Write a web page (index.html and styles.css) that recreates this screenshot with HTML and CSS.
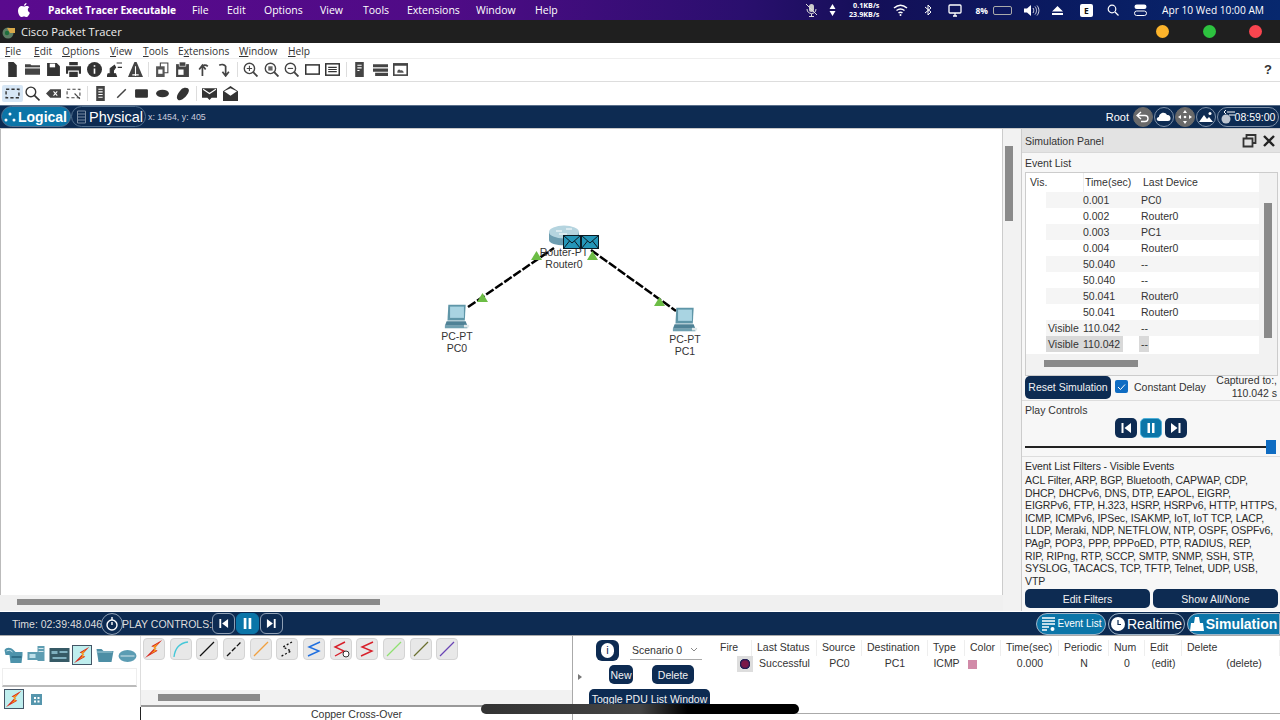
FILE: index.html
```html
<!DOCTYPE html>
<html lang="en">
<head>
<meta charset="utf-8">
<title>Cisco Packet Tracer</title>
<link rel="stylesheet" href="styles.css">
</head>
<body>
<svg class="defs" width="0" height="0" aria-hidden="true">
  <defs>
    <symbol id="bolt" viewBox="0 0 22 22"><path d="M20 1 8 8l4 1.500L1 21l14-8-4-2 9-10z" fill="#d8281e"/><path d="M16.500 4 9.500 8.500l4.500 1.500-7 6.500 6.500-3.500-3-2z" fill="#f9a81b"/></symbol>
    <symbol id="envelope" viewBox="0 0 18 14"><rect x=".5" y=".5" width="17" height="13" fill="#2596b8" stroke="#0a1a24"/><path d="M.5.5 9 8l8.500-7.500M.5 13.500 6.500 6M17.500 13.500 11.500 6" fill="none" stroke="#0a1a24"/></symbol>
    <symbol id="pc" viewBox="0 0 30 30"><path d="M5 1h20l-1 18H4z" fill="#5f96a8"/><rect x="7" y="3" width="16" height="13" fill="#a9d4e2"/><path d="M3 20h22l2 5H1z" fill="#4f8296"/><rect x="1" y="25" width="26" height="3" fill="#6fa0b0"/><path d="M23 24h6v3h-6z" fill="#dfe8ea"/></symbol>
    <symbol id="triangle" viewBox="0 0 10 8"><path d="M5 0 10 8H0z" fill="#6cbd45"/></symbol>
    <symbol id="prev" viewBox="0 0 12 12"><path d="M1.500 1h2v10h-2zM11 1v10L4.500 6z" fill="#fff"/></symbol>
    <symbol id="next" viewBox="0 0 12 12"><path d="M10.500 1h-2v10h2zM1 1v10l6.500-5z" fill="#fff"/></symbol>
    <symbol id="pause" viewBox="0 0 12 12"><path d="M2.500 1h2.500v10H2.500zM7 1h2.500v10H7z" fill="#fff"/></symbol>
  </defs>
</svg>

<header class="macbar">
  <svg class="apple" width="12" height="14" viewBox="0 0 12 14"><path d="M8.500 0c.1 1.300-1 2.800-2.500 2.800C5.900 1.500 7.100.2 8.500 0zM6 3.500c.8 0 1.500-.6 2.700-.6 1 0 2 .5 2.600 1.400-2.200 1.400-1.800 4.400.6 5.400-.7 1.800-2 4.300-3.400 4.300-1 0-1.300-.6-2.500-.6s-1.600.6-2.500.6C1.800 14 0 10.600 0 7.800 0 4.900 1.900 3 3.700 3c1 0 1.700.5 2.300.5z" fill="#fff"/></svg>
  <strong class="mac-app">Packet Tracer Executable</strong>
  <nav class="mac-menu"><span>File</span><span>Edit</span><span>Options</span><span>View</span><span>Tools</span><span>Extensions</span><span>Window</span><span>Help</span></nav>
  <div class="mac-status">
    <svg width="13" height="14" viewBox="0 0 13 14"><rect x="4" y="1" width="5" height="8" rx="2.500" fill="#ccc"/><path d="M2 6c0 6 9 6 9 0M6.500 11v2M4 13.500h5M1 1l11 11" fill="none" stroke="#ddd"/></svg>
    <svg class="st-arrows" width="7" height="12" viewBox="0 0 7 12"><path d="M3.500 0 6.500 5H.5zM3.500 12 .5 7h6z" fill="#fff"/></svg>
    <span class="st-speed">0.1KB/s<br>23.9KB/s</span>
    <svg class="st-wifi" width="15" height="12" viewBox="0 0 15 12"><path d="M1 4c4-3.500 9-3.500 13 0M3.500 6.500c2.500-2 5.500-2 8 0M5.500 9c1.200-1 2.800-1 4 0" fill="none" stroke="#fff" stroke-width="1.500"/><circle cx="7.500" cy="11" r="1" fill="#fff"/></svg>
    <svg class="st-bt" width="8" height="12" viewBox="0 0 8 12"><path d="M1 3l6 5-3 3V1l3 3-6 5" fill="none" stroke="#fff"/></svg>
    <svg class="st-display" width="14" height="13" viewBox="0 0 14 13"><rect x="1" y="1" width="12" height="8" rx="1" fill="none" stroke="#fff" stroke-width="1.300"/><path d="M5 12h4M7 9v3" stroke="#fff" stroke-width="1.300"/></svg>
    <span class="st-battery">8%</span>
    <span class="batt"></span>
    <svg class="st-vol" width="16" height="11" viewBox="0 0 16 11"><path d="M0 3.500h3L7 0v11L3 7.500H0z" fill="#fff"/><path d="M9 3c1 1.500 1 3.500 0 5M11 1.500c2 2.500 2 5.500 0 8M13 .5c2.500 3 2.500 7 0 10" fill="none" stroke="#fff" stroke-width=".8"/></svg>
    <svg class="st-eject" width="11" height="9" viewBox="0 0 11 9"><path d="M5.500 0 11 5.500H0zM0 7h11v2H0z" fill="#fff"/></svg>
    <span class="st-e">E</span>
    <svg class="st-search" width="12" height="12" viewBox="0 0 12 12"><circle cx="5" cy="5" r="3.800" fill="none" stroke="#fff" stroke-width="1.200"/><path d="m8 8 3.500 3.500" stroke="#fff" stroke-width="1.200"/></svg>
    <svg class="st-toggle" width="13" height="12" viewBox="0 0 13 12"><rect x=".5" y=".5" width="12" height="4.500" rx="2.200" fill="#fff"/><rect x=".5" y="7" width="12" height="4.500" rx="2.200" fill="none" stroke="#fff"/></svg>
    <span class="st-clock">Apr 10 Wed 10:00 AM</span>
  </div>
</header>

<div class="titlebar">
  <svg class="pt-logo" width="14" height="14" viewBox="0 0 14 14"><circle cx="6" cy="8" r="5.500" fill="#5e7d64"/><path d="M5 3h8v5H8z" fill="#d7a94a"/><circle cx="5" cy="8" r="2.200" fill="#1f6e3c"/></svg>
  <span class="title-text">Cisco Packet Tracer</span>
  <span class="dots"><i class="dot d-yellow"></i><i class="dot d-green"></i><i class="dot d-red"></i></span>
</div>

<nav class="menubar">
  <span><u>F</u>ile</span><span><u>E</u>dit</span><span><u>O</u>ptions</span><span><u>V</u>iew</span><span><u>T</u>ools</span><span>E<u>x</u>tensions</span><span><u>W</u>indow</span><span><u>H</u>elp</span>
</nav>

<div class="toolbar tb1">
  <svg class="ic" viewBox="0 0 14 14"><path d="M3 0h5l3 3v11H3z" fill="#333"/></svg>
  <svg class="ic" viewBox="0 0 14 14"><path d="M0 2h5l1 1h8v9H0z" fill="#444"/><path d="M0 5.500h14" stroke="#fff"/></svg>
  <svg class="ic" viewBox="0 0 14 14"><path d="M1 1h9l3 3v9H1z" fill="#333"/><rect x="3.500" y="1.500" width="5" height="3.500" fill="#fff"/></svg>
  <svg class="ic" viewBox="0 0 14 14"><path d="M3 0h8v3H3zM0 4h14v7h-2V8H2v3H0zM3 9h8v5H3z" fill="#333"/></svg>
  <svg class="ic" viewBox="0 0 14 14"><circle cx="7" cy="7" r="7" fill="#333"/><path d="M7 3v1.500M7 6v5" stroke="#fff" stroke-width="1.500"/></svg>
  <svg class="ic" viewBox="0 0 14 14"><path d="M0 14l1-3h2V6l4-3 1 2-2 3v3h2l1 3zM9 1h5M10 5h4" fill="#333" stroke="#333"/></svg>
  <svg class="ic" viewBox="0 0 14 14"><path d="M6 0 0 14h14L8 0z" fill="#444"/><path d="M7 4v9M4 12h6" stroke="#fff"/></svg>
  <i class="sep"></i>
  <svg class="ic" viewBox="0 0 14 14"><path d="M5 1h7v9H5z" fill="none" stroke="#444"/><path d="M1 4h8v10H1z" fill="#555"/><path d="M3 7h4v4H3z" fill="#fff"/></svg>
  <svg class="ic" viewBox="0 0 14 14"><path d="M1 2h12v12H1z" fill="#444"/><path d="M4 0h6v4H4z" fill="#444" stroke="#fff" stroke-width=".6"/><path d="M3 7h5v5H3z" fill="#fff"/></svg>
  <svg class="ic" viewBox="0 0 14 14"><path d="M6 13V4c0-1 3-2 5 0M3 7l3-4 3 4" fill="none" stroke="#444" stroke-width="1.600"/></svg>
  <svg class="ic" viewBox="0 0 14 14"><path d="M9 13V4C8 2 5 2 3 3M12 9l-3 4-3-4" fill="none" stroke="#444" stroke-width="1.600"/></svg>
  <i class="sep"></i>
  <svg class="ic" viewBox="0 0 14 14"><circle cx="6" cy="6" r="4.800" fill="none" stroke="#444" stroke-width="1.300"/><path d="m9.500 9.500 4 4" stroke="#444" stroke-width="1.800"/><path d="M3.500 6h5M6 3.500v5" stroke="#444"/></svg>
  <svg class="ic" viewBox="0 0 14 14"><circle cx="6" cy="6" r="4.800" fill="none" stroke="#444" stroke-width="1.300"/><path d="m9.500 9.500 4 4" stroke="#444" stroke-width="1.800"/><rect x="4" y="4" width="4" height="4" fill="#666"/></svg>
  <svg class="ic" viewBox="0 0 14 14"><circle cx="6" cy="6" r="4.800" fill="none" stroke="#444" stroke-width="1.300"/><path d="m9.500 9.500 4 4" stroke="#444" stroke-width="1.800"/><path d="M3.500 6h5" stroke="#444"/></svg>
  <svg class="ic" viewBox="0 0 14 14"><rect x=".7" y="2.700" width="12.600" height="8.600" fill="none" stroke="#333" stroke-width="1.400"/></svg>
  <svg class="ic" viewBox="0 0 14 14"><rect x=".7" y="1.700" width="12.600" height="10.600" fill="none" stroke="#333" stroke-width="1.400"/><path d="M3 5h8M3 7h8M3 9h8" stroke="#333"/></svg>
  <i class="sep"></i>
  <svg class="ic" viewBox="0 0 14 14"><rect x="3" y="0" width="8" height="14" fill="#444"/><path d="M5 3h4M5 5.500h4M5 8h2" stroke="#fff"/></svg>
  <svg class="ic" viewBox="0 0 14 14"><path d="M0 2h14v3H0zM0 6h14v3H0zM2 10h12v3H2z" fill="#444"/></svg>
  <svg class="ic" viewBox="0 0 14 14"><rect y="1" width="14" height="12" fill="#444"/><rect x="1.500" y="3.500" width="11" height="8" fill="#fff"/><path d="M4 10c0-3 2-4 3-2 1-1 3 0 3 2z" fill="#555"/></svg>
  <span class="help">?</span>
</div>

<div class="toolbar tb2">
  <span class="sel-wrap"><svg class="ic" viewBox="0 0 14 14"><rect x="1" y="3" width="12" height="8" fill="none" stroke="#333" stroke-width="1.300" stroke-dasharray="3 2"/></svg></span>
  <svg class="ic" viewBox="0 0 14 14"><circle cx="5.500" cy="5.500" r="4.500" fill="none" stroke="#333" stroke-width="1.300"/><path d="m8.500 8.500 5 5" stroke="#333" stroke-width="1.500"/></svg>
  <svg class="ic" viewBox="0 0 14 14"><path d="M0 7l4-4h10v8H4z" fill="#444"/><path d="m7 5 3.500 4M10.500 5 7 9" stroke="#fff"/></svg>
  <svg class="ic" viewBox="0 0 14 14"><path d="M1 3h12v8H1z" fill="none" stroke="#444" stroke-dasharray="3 2"/><path d="m8 7 5 5" stroke="#444"/></svg>
  <i class="sep"></i>
  <svg class="ic" viewBox="0 0 14 14"><rect x="3" y="0" width="8" height="14" fill="#444"/><path d="M5 3h4M5 5.500h4M5 8h4M5 10.500h4" stroke="#fff"/></svg>
  <svg class="ic" viewBox="0 0 14 14"><path d="m3 11 8-8" stroke="#444" stroke-width="1.400"/></svg>
  <svg class="ic" viewBox="0 0 14 14"><rect x="1" y="3" width="12" height="8" rx="1" fill="#333"/></svg>
  <svg class="ic" viewBox="0 0 14 14"><ellipse cx="7" cy="7" rx="6" ry="3.500" fill="#333"/></svg>
  <svg class="ic" viewBox="0 0 14 14"><path d="M3 13c-3-2 0-7 3-10 2-2 7-2 7 1 0 4-7 11-10 9z" fill="#333"/></svg>
  <i class="sep"></i>
  <svg class="ic" viewBox="0 0 14 14"><path d="M0 2h14v9H9l-2 2-2-2H0z" fill="#333"/><path d="m1 3 6 4 6-4" fill="none" stroke="#fff"/></svg>
  <svg class="ic" viewBox="0 0 14 14"><path d="M0 5l7-5 7 5v9H0z" fill="#333"/><path d="m1 5 6-3 6 3-6 4z" fill="#fff"/></svg>
</div>

<div class="navbar">
  <button class="pill pill-active"><svg width="12" height="12" viewBox="0 0 12 12"><circle cx="6" cy="3" r="1.500" fill="#fff"/><circle cx="2" cy="9" r="1.500" fill="#fff"/><circle cx="10" cy="9" r="1.500" fill="#fff"/></svg>Logical</button>
  <button class="pill pill-phys"><svg width="11" height="14" viewBox="0 0 11 14"><path d="M1.500 1h8v12h-8zM1.500 4h8M1.500 7h8M1.500 10h8" fill="none" stroke="#7b8ca3"/></svg>Physical</button>
  <span class="coords">x: 1454, y: 405</span>
  <div class="nav-right">
    <span class="root">Root</span>
    <span class="round grey"><svg width="14" height="12" viewBox="0 0 14 12"><path d="M5 1 1 4.500 5 8M1 4.500h8c4 0 4 6 0 6H5" fill="none" stroke="#fff" stroke-width="1.400"/></svg></span>
    <span class="round"><svg width="16" height="12" viewBox="0 0 16 12"><path d="M3 10C0 10 0 6 3 6c0-4 6-6 8-2 4-1 5 6 1 6z" fill="#fff"/></svg></span>
    <span class="round grey"><svg width="14" height="14" viewBox="0 0 14 14"><path d="M7 0 9 3H5zM7 14 5 11h4zM0 7l3-2v4zM14 7l-3 2V5z" fill="#fff"/><circle cx="7" cy="7" r="1.300" fill="#fff"/></svg></span>
    <span class="round"><svg width="14" height="12" viewBox="0 0 14 12"><path d="M0 11 5 4l3 4 2-2 4 5z" fill="#fff"/><circle cx="11" cy="2.500" r="1.500" fill="#fff"/></svg></span>
    <span class="round clockpill"><svg width="14" height="14" viewBox="0 0 14 14"><circle cx="5" cy="9" r="4.500" fill="#bcc4cf"/><path d="M6 2h8M8 5h6M5 0 3 2l2 2" stroke="#fff" fill="none"/></svg>08:59:00</span>
  </div>
</div>

<main class="workspace">
  <section class="canvas-area">
    <div class="canvas-row">
      <div class="canvas">
        <svg class="links" width="1002" height="466" viewBox="0 0 1002 466">
          <path d="M467 178 553 119M590 121 675 182" stroke="#000" stroke-width="2.500" stroke-dasharray="9 2" fill="none"/>
        </svg>
        <svg class="tri t1" width="11" height="9"><use href="#triangle"/></svg>
        <svg class="tri t2" width="11" height="9"><use href="#triangle"/></svg>
        <svg class="tri t3" width="11" height="9"><use href="#triangle"/></svg>
        <svg class="tri t4" width="11" height="9"><use href="#triangle"/></svg>
        <div class="node n-router">
          <svg width="32" height="22" viewBox="0 0 32 22"><path d="M1 7v8c0 7 30 7 30 0V7z" fill="#6d9db0"/><ellipse cx="16" cy="7" rx="15" ry="6.500" fill="#b5d4df"/><path d="M8 6h6M18 4h6M11 9h8" stroke="#fff"/></svg>
          <span>Router-PT<br>Router0</span>
        </div>
        <svg class="env e1" width="18" height="14"><use href="#envelope"/></svg>
        <svg class="env e2" width="18" height="14"><use href="#envelope"/></svg>
        <div class="node n-pc0"><svg width="30" height="26" viewBox="0 0 30 30"><use href="#pc"/></svg><span>PC-PT<br>PC0</span></div>
        <div class="node n-pc1"><svg width="30" height="26" viewBox="0 0 30 30"><use href="#pc"/></svg><span>PC-PT<br>PC1</span></div>
      </div>
      <div class="vscroll"><i></i></div>
    </div>
    <div class="hscroll"><i></i></div>
  </section>

  <aside class="panel">
    <div class="panel-head"><span>Simulation Panel</span>
      <svg width="15" height="14" viewBox="0 0 15 14"><path d="M4.500 4V1h9v8h-3M1.500 4.500h9v8h-9z" fill="none" stroke="#333" stroke-width="1.800"/></svg>
      <svg width="14" height="14" viewBox="0 0 14 14"><path d="m2 2 10 10M12 2 2 12" stroke="#222" stroke-width="2.400"/></svg>
    </div>
    <div class="ev-label">Event List</div>
    <div class="ev-box">
      <div class="ev-main">
        <div class="ev-table">
          <div class="ev-h"><span class="c-vis h-vis">Vis.</span><span class="c-time">Time(sec)</span><span class="c-dev h-dev">Last Device</span></div>
          <div class="ev-r alt"><span class="c-vis"></span><span class="c-time">0.001</span><span class="c-dev">PC0</span></div>
          <div class="ev-r"><span class="c-vis"></span><span class="c-time">0.002</span><span class="c-dev">Router0</span></div>
          <div class="ev-r alt"><span class="c-vis"></span><span class="c-time">0.003</span><span class="c-dev">PC1</span></div>
          <div class="ev-r"><span class="c-vis"></span><span class="c-time">0.004</span><span class="c-dev">Router0</span></div>
          <div class="ev-r alt"><span class="c-vis"></span><span class="c-time">50.040</span><span class="c-dev">--</span></div>
          <div class="ev-r"><span class="c-vis"></span><span class="c-time">50.040</span><span class="c-dev">--</span></div>
          <div class="ev-r alt"><span class="c-vis"></span><span class="c-time">50.041</span><span class="c-dev">Router0</span></div>
          <div class="ev-r"><span class="c-vis"></span><span class="c-time">50.041</span><span class="c-dev">Router0</span></div>
          <div class="ev-r alt"><span class="c-vis">Visible</span><span class="c-time">110.042</span><span class="c-dev">--</span></div>
          <div class="ev-r sel"><span class="c-vis">Visible</span><span class="c-time">110.042</span><span class="c-dev"><b>--</b></span></div>
        </div>
        <div class="ev-v"><i></i></div>
      </div>
      <div class="ev-hs"><i></i></div>
    </div>
    <div class="sim-row">
      <button class="btn reset">Reset Simulation</button>
      <span class="check"><svg width="9" height="8" viewBox="0 0 9 8"><path d="m1 4 2.500 2.500L8 1.500" fill="none" stroke="#fff"/></svg></span>
      <span class="cdelay">Constant Delay</span>
      <span class="captured">Captured to:,<br>110.042 s</span>
    </div>
    <div class="play">
      <div class="play-label">Play Controls</div>
      <div class="play-btns">
        <button class="pbtn"><svg width="12" height="12"><use href="#prev"/></svg></button>
        <button class="pbtn on"><svg width="12" height="12"><use href="#pause"/></svg></button>
        <button class="pbtn"><svg width="12" height="12"><use href="#next"/></svg></button>
      </div>
      <div class="slider"><i></i></div>
    </div>
    <div class="filters">
      <div class="f-title">Event List Filters - Visible Events</div>
      <p>ACL Filter, ARP, BGP, Bluetooth, CAPWAP, CDP,<br>DHCP, DHCPv6, DNS, DTP, EAPOL, EIGRP,<br>EIGRPv6, FTP, H.323, HSRP, HSRPv6, HTTP, HTTPS,<br>ICMP, ICMPv6, IPSec, ISAKMP, IoT, IoT TCP, LACP,<br>LLDP, Meraki, NDP, NETFLOW, NTP, OSPF, OSPFv6,<br>PAgP, POP3, PPP, PPPoED, PTP, RADIUS, REP,<br>RIP, RIPng, RTP, SCCP, SMTP, SNMP, SSH, STP,<br>SYSLOG, TACACS, TCP, TFTP, Telnet, UDP, USB,<br>VTP</p>
      <div class="f-btns"><button class="btn">Edit Filters</button><button class="btn">Show All/None</button></div>
    </div>
  </aside>
</main>

<div class="simbar">
  <span class="time">Time: 02:39:48.046</span>
  <span class="timer"><svg width="14" height="14" viewBox="0 0 14 14"><circle cx="7" cy="8" r="5" fill="none" stroke="#fff" stroke-width="1.400"/><path d="M7 0v3M7 5v3" stroke="#fff" stroke-width="1.400"/></svg></span>
  <span class="pc-label">PLAY CONTROLS:</span>
  <button class="sbtn"><svg width="11" height="11" viewBox="0 0 12 12"><use href="#prev"/></svg></button>
  <button class="sbtn on"><svg width="13" height="13" viewBox="0 0 12 12"><use href="#pause"/></svg></button>
  <button class="sbtn"><svg width="11" height="11" viewBox="0 0 12 12"><use href="#next"/></svg></button>
  <div class="modes">
    <button class="mode m-ev"><svg width="15" height="16" viewBox="0 0 15 16"><path d="M1 2h13M1 5h13M1 8h13M1 11h7M1 14h5" stroke="#fff" stroke-width="1.400"/><circle cx="11.500" cy="13" r="2" fill="#fff"/></svg>Event List</button>
    <button class="mode m-rt"><svg width="14" height="14" viewBox="0 0 14 14"><circle cx="7" cy="7" r="7" fill="#fff"/><path d="M7 3v4.500h3" fill="none" stroke="#0d2b52" stroke-width="1.200"/></svg>Realtime</button>
    <button class="mode m-sim"><svg width="14" height="14" viewBox="0 0 14 14"><path d="M5 0h4l1 6h3l1 8H0l1-8h3z" fill="#fff"/></svg>Simulation</button>
  </div>
</div>

<footer class="bottom">
  <div class="devices">
    <div class="dev-row">
      <svg class="dev" viewBox="0 0 20 18"><path d="M1 4c2-3 6-3 9 0l2 2h7v3l-1 8H7l-1-8H2z" fill="#4d93ab"/><path d="M3 5c2-1 4-1 6 1" fill="none" stroke="#bfe0ea"/><path d="M8 10h10v2H8z" fill="#2f6f88"/></svg>
      <svg class="dev" viewBox="0 0 20 18"><path d="M11 0h7v15h-7zM1 6h10v8H1z" fill="#5e9db2"/><path d="M3 8h6v4H3z" fill="#bfe0ea"/><path d="M12 2h5v1h-5zM12 5h5v1h-5z" fill="#d5e6ec"/></svg>
      <svg class="dev" viewBox="0 0 20 18"><rect x="0" y="2" width="20" height="14" fill="#365a66"/><path d="M2 5h6v3H2zM10 5h8v2h-8zM3 11h14v2H3z" fill="#7fb0bf"/></svg>
      <span class="dev-sel"><svg width="18" height="18"><use href="#bolt"/></svg></span>
      <svg class="dev" viewBox="0 0 20 18"><path d="M2 3h5l2 2h10l-2 11H4z" fill="#4d8ea5"/><path d="M2 6h16" stroke="#a8cfdc"/></svg>
      <svg class="dev" viewBox="0 0 20 18"><ellipse cx="10" cy="10" rx="9" ry="6" fill="#5b9cb3"/><path d="M3 10h14" stroke="#d5e6ec"/></svg>
    </div>
    <div class="dev-input"></div>
    <div class="dev-row2">
      <span class="dev-sel"><svg width="18" height="18"><use href="#bolt"/></svg></span>
      <svg class="grid-ic" width="11" height="11" viewBox="0 0 11 11"><rect width="11" height="11" fill="#5696ad"/><path d="M3 3h2v2H3zM6.500 3h2v2h-2zM3 6.500h2v2H3zM6.500 6.500h2v2h-2z" fill="#fff"/></svg>
    </div>
  </div>
  <div class="cables">
    <div class="cable-row">
      <span class="cb"><svg width="20" height="20"><use href="#bolt"/></svg></span>
      <span class="cb"><svg width="18" height="18" viewBox="0 0 18 18"><path d="M2 17C3 8 8 3 16 2" fill="none" stroke="#46c8d8" stroke-width="1.300"/></svg></span>
      <span class="cb"><svg width="18" height="18" viewBox="0 0 18 18"><path d="m2 16 14-14" stroke="#111" stroke-width="1.300"/></svg></span>
      <span class="cb"><svg width="18" height="18" viewBox="0 0 18 18"><path d="m2 16 14-14" stroke="#111" stroke-width="1.300" stroke-dasharray="5 2"/></svg></span>
      <span class="cb"><svg width="18" height="18" viewBox="0 0 18 18"><path d="m2 16 14-14" stroke="#f0a040" stroke-width="1.300"/></svg></span>
      <span class="cb"><svg width="18" height="18" viewBox="0 0 18 18"><path d="m14 2-9 5 8 4-11 6" fill="none" stroke="#111" stroke-width="1.300" stroke-dasharray="2 2"/></svg></span>
      <span class="cb"><svg width="18" height="18" viewBox="0 0 18 18"><path d="M15 2 4 7l10 4L3 16" fill="none" stroke="#1f6fe0" stroke-width="1.400"/></svg></span>
      <span class="cb"><svg width="18" height="18" viewBox="0 0 18 18"><path d="M13 2 3 7l9 4-9 5" fill="none" stroke="#d8202a" stroke-width="1.400"/><circle cx="14" cy="14" r="3" fill="#fff" stroke="#333"/></svg></span>
      <span class="cb"><svg width="18" height="18" viewBox="0 0 18 18"><path d="M15 2 4 7l10 4L3 16" fill="none" stroke="#d8202a" stroke-width="1.400"/></svg></span>
      <span class="cb"><svg width="18" height="18" viewBox="0 0 18 18"><path d="m2 16 14-14" stroke="#8fe070" stroke-width="1.300"/></svg></span>
      <span class="cb"><svg width="18" height="18" viewBox="0 0 18 18"><path d="m2 16 14-14" stroke="#6b7030" stroke-width="1.300"/></svg></span>
      <span class="cb"><svg width="18" height="18" viewBox="0 0 18 18"><path d="m2 16 14-14" stroke="#6a45b5" stroke-width="1.300"/></svg></span>
    </div>
    <div class="cable-scroll"><i></i></div>
    <div class="cable-name">Copper Cross-Over</div>
  </div>
  <div class="scenario">
    <span class="expander"></span>
    <div class="sc-col">
      <div class="sc-top">
        <span class="info"><b>i</b></span>
        <span class="sc-select">Scenario 0<svg width="8" height="5" viewBox="0 0 8 5"><path d="m1 1 3 3 3-3" fill="none" stroke="#888"/></svg></span>
      </div>
      <div class="sc-btns"><button class="btn small">New</button><button class="btn small">Delete</button></div>
      <button class="btn toggle">Toggle PDU List Window</button>
    </div>
  </div>
  <div class="pdu">
    <div class="pdu-grid">
      <span class="ph">Fire</span><span class="ph">Last Status</span><span class="ph">Source</span><span class="ph">Destination</span><span class="ph">Type</span><span class="ph">Color</span><span class="ph">Time(sec)</span><span class="ph">Periodic</span><span class="ph">Num</span><span class="ph">Edit</span><span class="ph">Delete</span>
      <span class="pd fire"><i></i></span><span class="pd">Successful</span><span class="pd">PC0</span><span class="pd">PC1</span><span class="pd">ICMP</span><span class="pd"><em class="swatch"></em></span><span class="pd">0.000</span><span class="pd">N</span><span class="pd">0</span><span class="pd">(edit)</span><span class="pd pd-del">(delete)</span>
    </div>
  </div>
  <div class="homebar"></div>
</footer>
</body>
</html>
```
FILE: styles.css
```css
* { box-sizing: border-box; }
html, body { margin: 0; padding: 0; }
body { width: 1280px; height: 720px; overflow: hidden; background: #fff; font-family: "Liberation Sans", Arial, sans-serif; font-size: 11px; color: #222; display: flex; flex-direction: column; }
.defs { position: absolute; }
button { font-family: inherit; border: 0; padding: 0; margin: 0; color: #fff; }
i, em { font-style: normal; display: block; }

/* mac menu bar */
.macbar { height: 20px; flex: none; display: flex; align-items: center; color: #fff; background: linear-gradient(90deg, #5a0a8e 0%, #4f0b86 35%, #2a0f6e 58%, #140f58 68%, #0a1a60 82%, #07286e 100%); font-family: "Open Sans", sans-serif; font-size: 10.5px; padding-left: 18px; }
.apple { flex: none; margin-right: 18px; }
.mac-app { font-weight: 700; width: 144px; font-size: 10.2px; white-space: nowrap; }
.mac-menu { display: flex; }
.mac-menu span:nth-child(1) { width: 35px; }
.mac-menu span:nth-child(2) { width: 37px; }
.mac-menu span:nth-child(3) { width: 56px; }
.mac-menu span:nth-child(4) { width: 43px; }
.mac-menu span:nth-child(5) { width: 44px; }
.mac-menu span:nth-child(6) { width: 69px; }
.mac-menu span:nth-child(7) { width: 59px; }
.mac-status { margin-left: auto; display: flex; align-items: center; padding-right: 16px; }
.st-arrows { margin-left: 11px; }
.st-speed { margin-left: 5px; width: 38px; font-size: 7.2px; line-height: 9px; font-weight: 700; text-align: right; }
.st-wifi { margin-left: 14px; }
.st-bt { margin-left: 16px; }
.st-display { margin-left: 16px; }
.st-battery { margin-left: 13px; font-size: 8.500px; font-weight: 700; }
.batt { width: 19px; height: 9px; margin-left: 5px; border: 1px solid #aaa; border-radius: 2px; }
.st-vol { margin-left: 12px; }
.st-eject { margin-left: 12px; }
.st-e { margin-left: 17px; width: 13px; height: 13px; background: #fff; color: #111; border-radius: 2px; font-size: 8.500px; font-weight: 700; text-align: center; line-height: 13px; }
.st-search { margin-left: 14px; }
.st-toggle { margin-left: 15px; }
.st-clock { margin-left: 15px; font-size: 10.200px; white-space: nowrap; }

/* window title */
.titlebar { height: 23px; flex: none; background: #1f1f1f; display: flex; align-items: center; padding-left: 2px; color: #eee; font-family: "Open Sans", sans-serif; font-size: 11.200px; }
.pt-logo { margin-right: 5px; }
.dots { margin-left: auto; display: flex; gap: 33.500px; padding-right: 18px; }
.dot { width: 13px; height: 13px; border-radius: 50%; }
.d-yellow { background: #fcb42b; }
.d-green { background: #2dc23f; }
.d-red { background: #f9454f; }

/* menu */
.menubar { height: 16px; flex: none; display: flex; align-items: center; padding-left: 5px; font-family: "Open Sans", sans-serif; font-size: 10.200px; color: #333; border-bottom: 1px solid #eee; }
.menubar span:nth-child(1) { width: 29px; }
.menubar span:nth-child(2) { width: 28px; }
.menubar span:nth-child(3) { width: 48px; }
.menubar span:nth-child(4) { width: 33px; }
.menubar span:nth-child(5) { width: 35px; }
.menubar span:nth-child(6) { width: 61px; }
.menubar span:nth-child(7) { width: 49px; }

/* toolbars */
.toolbar { flex: none; display: flex; align-items: center; padding-left: 2px; }
.tb1 { height: 23px; border-bottom: 1px solid #ddd; padding-bottom: 2px; }
.tb2 { height: 23px; }
.ic { width: 15px; height: 15px; margin: 0 2.750px; flex: none; }
.sep { width: 1px; height: 15px; background: #ddd; margin: 0 2.750px; flex: none; }
.help { margin-left: auto; padding-right: 8px; font-weight: 700; font-size: 13px; color: #333; }
.sel-wrap { width: 20.500px; height: 17px; background: #d6e6f5; display: flex; align-items: center; justify-content: center; border-radius: 2px; flex: none; }
.sel-wrap .ic { margin: 0; }

/* nav */
.navbar { height: 23px; flex: none; background: #0d2b52; border-top: 1px solid #5a6f8a; display: flex; align-items: center; padding: 0 0 1px 1px; color: #fff; }
.pill { height: 21px; border-radius: 11px; display: flex; align-items: center; gap: 2px; background: transparent; border: 1px solid #52708f; }
.pill-active { width: 70px; padding-left: 2px; background: #0b75a8; font-weight: 700; font-size: 14px; }
.pill-phys { width: 75px; padding-left: 4px; font-size: 14.500px; }
.coords { margin-left: 2px; font-size: 8.800px; color: #ccd; }
.nav-right { margin-left: auto; display: flex; align-items: center; gap: 1px; padding-right: 1px; }
.root { font-size: 11px; margin-right: 3px; }
.round { width: 20px; height: 20px; border-radius: 10px; border: 1px solid #7d90a8; display: flex; align-items: center; justify-content: center; }
.round.grey { background: #6a6a6a; border-color: #6a6a6a; }
.clockpill { width: 62px; font-size: 10.500px; }

/* workspace */
.workspace { height: 483px; flex: none; display: flex; border-top: 1px solid #c8c8c8; }
.canvas-area { width: 1021px; flex: none; display: flex; flex-direction: column; background: #f2f2f2; }
.canvas-row { flex: 1; display: flex; min-height: 0; }
.canvas { position: relative; width: 1003px; flex: none; background: #fff; border-left: 1px solid #bbb; border-right: 1px solid #ccc; }
.links { position: absolute; left: 0; top: 0; }
.vscroll { width: 13px; padding: 17px 2px 0; background: #f2f2f2; }
.vscroll i { width: 8px; height: 75px; background: #8a8a8a; }
.hscroll { height: 16px; flex: none; padding: 4px 0 0 17px; width: 1003px; background: #f0f0f0; }
.hscroll i { width: 363px; height: 6px; background: #8a8a8a; }
.tri { position: absolute; }
.t1 { left: 530px; top: 122px; }
.t2 { left: 476px; top: 164px; }
.t3 { left: 586px; top: 122px; }
.t4 { left: 653px; top: 168px; }
.node { position: absolute; display: flex; flex-direction: column; align-items: center; width: 70px; color: #333; font-size: 10.500px; line-height: 12px; text-align: center; }
.n-router { left: 528px; top: 96px; }
.n-router span { margin-top: -1px; }
.n-pc0 { left: 421px; top: 175px; }
.n-pc1 { left: 649px; top: 178px; }
.env { position: absolute; top: 106px; }
.e1 { left: 562px; }
.e2 { left: 580px; }

/* panel */
.panel { width: 259px; flex: none; background: #f7f7f7; border-left: 1px solid #ccc; display: flex; flex-direction: column; padding: 0 2px 0 3px; }
.panel-head { height: 24px; margin: 0 -2px 0 -3px; padding: 0 4px 0 3px; background: #e3e3e3; display: flex; align-items: center; gap: 5px; color: #333; font-size: 10.500px; border-bottom: 1px solid #d8d8d8; flex: none; }
.panel-head span { margin-right: auto; }
.ev-label { height: 18px; line-height: 21px; font-size: 10.500px; color: #333; flex: none; }
.ev-box { height: 204px; flex: none; border: 1px solid #ccc; background: #fff; margin-top: 1px; }
.ev-main { display: flex; height: 181px; }
.ev-table { width: 234px; }
.ev-h, .ev-r { display: flex; align-items: center; height: 16px; font-size: 10.500px; color: #333; }
.ev-h { height: 19px; line-height: 19px; }
.ev-h span { height: 19px; }
.c-vis { width: 57px; padding-left: 21px; flex: none; white-space: nowrap; }
.h-vis { padding-left: 4px; }
.c-time { width: 58px; flex: none; }
.c-dev { flex: 1; }
.ev-h .c-time { padding-left: 1px; border-left: 1px solid #eee; }
.h-dev { padding-left: 2px; }
.ev-r .c-vis, .ev-r .c-time, .ev-r .c-dev { height: 16px; line-height: 16px; }
.ev-r .c-vis { margin-left: 20px; width: 37px; padding-left: 2px; }
.alt .c-vis, .alt .c-time, .alt .c-dev { background: #f5f5f5; }
.sel .c-vis, .sel .c-time { background: #d9d9d9; }
.sel .c-time { width: 40px; margin-right: 18px; }
.sel b { font-weight: 400; background: #d9d9d9; display: inline-block; width: 10px; height: 16px; margin-left: -2px; padding-left: 2px; }
.ev-v { flex: 1; background: #f2f2f2; padding: 30px 5px 0 5px; margin-left: -1px; }
.ev-v i { width: 8px; height: 135px; background: #8a8a8a; }
.ev-hs { height: 21px; background: #f2f2f2; padding: 6px 0 0 18px; }
.ev-hs i { width: 94px; height: 7px; background: #8a8a8a; }
.sim-row { height: 25px; flex: none; display: flex; align-items: center; border-bottom: 1px solid #ddd; margin: 0 -2px 0 -3px; padding: 0 3px; }
.btn { background: #0d2b52; border-radius: 5px; font-size: 10.500px; color: #f2f2f2; }
.reset { width: 86px; height: 23px; margin-top: -2px; }
.check { width: 13px; height: 13px; border-radius: 2px; background: #0f6cc2; margin-left: 4px; display: flex; align-items: center; justify-content: center; margin-top: -3px; }
.cdelay { margin-left: 6px; font-size: 10.500px; color: #333; margin-top: -3px; }
.captured { margin-left: auto; text-align: right; font-size: 10.500px; line-height: 13px; color: #333; margin-top: -2px; }
.play { height: 56px; flex: none; border-bottom: 1px solid #ddd; margin: 0 -2px 0 -3px; padding: 3px 3px 0; }
.play-label { font-size: 10.500px; height: 14px; line-height: 13px; color: #333; }
.play-btns { display: flex; justify-content: center; gap: 3px; height: 20px; }
.pbtn { width: 22px; height: 20px; background: #0d2b52; border-radius: 5px; display: flex; align-items: center; justify-content: center; }
.pbtn.on { background: #0b75a8; border: 1px solid #4fb0d8; }
.slider { height: 2px; margin: 8px 1px 0 0; background: #222; position: relative; }
.slider i { position: absolute; right: 0; top: -6px; width: 10px; height: 14px; background: #0f6cc2; }
.filters { flex: 1; display: flex; flex-direction: column; min-height: 0; font-size: 10.500px; color: #2a2a2a; letter-spacing: -.1px; }
.f-title { height: 17px; line-height: 19px; flex: none; }
.filters p { margin: 0; line-height: 12.600px; white-space: nowrap; flex: none; height: 115px; }
.f-btns { display: flex; gap: 3px; }
.f-btns .btn { width: 125px; height: 19px; }

/* sim bar */
.simbar { height: 24px; flex: none; background: #0d2b52; color: #ddd; display: flex; align-items: center; padding-left: 12px; border-top: 1px solid #fff; font-size: 10.500px; }
.time { width: 88px; white-space: nowrap; }
.timer { width: 22px; height: 22px; border-radius: 50%; border: 1px solid #8fa0b5; display: flex; align-items: center; justify-content: center; margin-left: 1px; }
.pc-label { width: 90px; margin-left: -1px; white-space: nowrap; }
.sbtn { width: 23px; height: 21px; border: 1px solid #8fa0b5; border-radius: 6px; background: transparent; display: flex; align-items: center; justify-content: center; margin-right: 1px; }
.sbtn.on { background: #0b75a8; border-color: #0b75a8; }
.modes { margin-left: auto; display: flex; gap: 2px; height: 22px; }
.mode { border-radius: 11px; border: 1px solid #9fb5c8; background: transparent; display: flex; align-items: center; justify-content: center; white-space: nowrap; gap: 2px; }
.m-ev { width: 70px; background: #0b75a8; font-size: 10px; }
.m-rt { width: 77px; font-size: 14px; }
.m-sim { width: 93px; background: #0b75a8; font-size: 14px; font-weight: 700; border-radius: 11px 0 0 11px; }

/* bottom */
.bottom { height: 86px; flex: none; display: flex; position: relative; border-top: 1px solid #aaa; background: #fff; }
.devices { width: 140px; flex: none; padding: 9px 2px 0 2px; }
.dev-row { display: flex; align-items: center; height: 20px; gap: 2px; padding-left: 1px; }
.dev { width: 21px; height: 18px; flex: none; }
.dev-sel { width: 20px; height: 20px; background: #bfeeee; border: 1px solid #456; flex: none; display: block; line-height: 0; }
.dev-input { height: 19px; margin-top: 3px; margin-right: 1px; border: 1px solid #eee; border-bottom: 2px solid #bbb; }
.dev-row2 { display: flex; align-items: center; height: 20px; margin-top: 2px; padding-left: 2px; gap: 7px; }
.cables { width: 433px; flex: none; display: flex; flex-direction: column; border-left: 1px solid #ddd; border-right: 1px solid #aaa; }
.cable-row { height: 54px; flex: none; display: flex; gap: 4.670px; padding: 2px 0 0 2px; }
.cb { width: 22px; height: 22px; background: #e8e8e8; border: 1px solid #d4d4d4; border-radius: 4px; display: flex; align-items: center; justify-content: center; flex: none; }
.cb svg { flex: none; }
.cable-scroll { height: 17px; flex: none; background: #f2f2f2; padding: 4px 0 0 17px; border-bottom: 2px solid #999; }
.cable-scroll i { width: 102px; height: 7px; background: #8a8a8a; }
.cable-name { flex: 1; margin-left: -1px; padding-top: 1px; border-left: 1px solid #222; text-align: center; font-size: 10.500px; line-height: 13px; color: #333; }
.scenario { width: 142px; flex: none; display: flex; }
.expander { width: 0; height: 0; margin: 38px 0 0 5px; border-left: 4px solid #777; border-top: 3px solid transparent; border-bottom: 3px solid transparent; }
.sc-col { flex: 1; padding: 3px 5px 0 10px; display: flex; flex-direction: column; }
.sc-top { display: flex; align-items: center; height: 22px; margin-left: 4px; gap: 11px; }
.info { width: 23px; height: 21px; background: #0d2b52; border-radius: 6px; display: flex; align-items: center; justify-content: center; }
.info b { background: #fff; color: #0d2b52; width: 13px; height: 15px; border-radius: 7px; text-align: center; font-size: 11px; line-height: 15px; font-weight: 400; }
.sc-select { width: 72px; height: 19px; border-bottom: 1px solid #aaa; display: flex; align-items: center; padding-left: 2px; gap: 8px; font-size: 10.500px; color: #333; }
.sc-btns { display: flex; gap: 19px; margin: 4px 0 0 17px; }
.btn.small { height: 19px; }
.sc-btns .btn:first-child { width: 24px; }
.sc-btns .btn:last-child { width: 42px; }
.toggle { height: 20px; width: 121px; margin: 5px 0 0 -3px; white-space: nowrap; font-size: 10.500px; }
.pdu { flex: 1; padding: 4px 0 0; border-bottom: 1px solid #aaa; margin-bottom: 7px; }
.pdu-grid { display: grid; grid-template-columns: 37px 65px 45px 66px 37px 36px 58px 50px 36px 37px 98px; font-size: 10.500px; color: #333; }
.ph { height: 16px; line-height: 15px; padding-left: 5px; border-right: 1px solid #eee; }
.pd { height: 15px; line-height: 15px; text-align: center; }
.pd-del { padding-left: 26px; }
.fire i { width: 16px; height: 16px; margin-left: 22px; background: radial-gradient(circle, #7a1848 0 3px, #141f55 5px, #ddd 5.500px); }
.swatch { width: 9px; height: 9px; background: #d18aa8; margin: 4px 0 0 3px; }
.homebar { position: absolute; left: 481px; top: 68px; width: 318px; height: 10px; border-radius: 5px; background: linear-gradient(90deg, #333, #444 50%, #000 65%); }
```
